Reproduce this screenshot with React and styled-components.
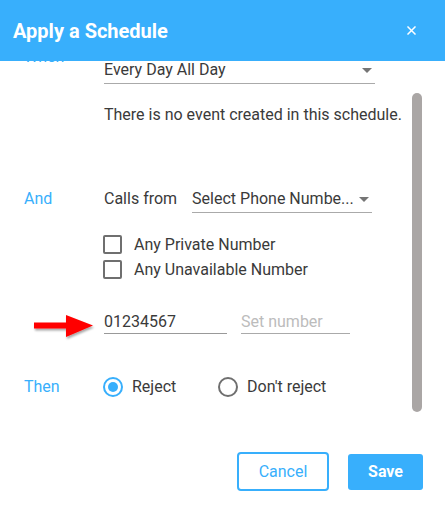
import React from "react";
import styled, { createGlobalStyle } from "styled-components";

const GlobalStyle = createGlobalStyle`
  html, body {
    margin: 0;
    padding: 0;
    background: #ffffff;
  }
  body {
    font-family: Roboto, "Liberation Sans", sans-serif;
    color: #3a3a3a;
  }
`;

const BLUE = "#38affc";

const App = () => {
  return (
    <>
      <GlobalStyle />
      <Dialog>
        <Header>
          <Title>Apply a Schedule</Title>
          <CloseButton aria-label="close">
            <svg width="9" height="9" viewBox="0 0 9 9">
              <path
                d="M1 1 L8 8 M8 1 L1 8"
                stroke="#fff"
                strokeWidth="1.5"
                strokeLinecap="square"
              />
            </svg>
          </CloseButton>
        </Header>

        <Body>
          <Content>
            <Row>
              <Label>When</Label>
              <Select $width={271} $top={15}>
                <span>Every Day All Day</span>
                <Caret />
              </Select>
            </Row>

            <Note>There is no event created in this schedule.</Note>

            <Row $mt={60} $align="flex-end">
              <Label $lh={20} $pb={4}>And</Label>
              <Inline>
                <PlainText>Calls from</PlainText>
                <Select $width={180} $top={4}>
                  <Ellipsis>Select Phone Numbe...</Ellipsis>
                  <Caret $gap={4} />
                </Select>
              </Inline>
            </Row>

            <Checks>
              <Check>
                <Box />
                Any Private Number
              </Check>
              <Check>
                <Box />
                Any Unavailable Number
              </Check>
            </Checks>

            <Row $mt={27} $align="center">
              <ArrowCell>
                <svg width="66" height="40" viewBox="0 0 66 40">
                  <defs>
                    <filter id="sh" x="-20%" y="-40%" width="140%" height="180%">
                      <feDropShadow dx="1" dy="2" stdDeviation="1.2" floodColor="#000" floodOpacity="0.35" />
                    </filter>
                  </defs>
                  <path
                    d="M3 20.5 L35 20.5 L35 13 L62 23.5 L35 35 L35 26.5 L3 26.5 Z"
                    fill="#ff0000"
                    filter="url(#sh)"
                  />
                </svg>
              </ArrowCell>
              <Inline $gap={14}>
                <TextField $width={123}>01234567</TextField>
                <TextField $width={109} $placeholder>Set number</TextField>
              </Inline>
            </Row>

            <Row $mt={41} $align="center">
              <Label $lh={24}>Then</Label>
              <Inline $gap={0}>
                <Radio>
                  <Circle $checked />
                  Reject
                </Radio>
                <Radio>
                  <Circle />
                  Don't reject
                </Radio>
              </Inline>
            </Row>
          </Content>
          <Thumb />
        </Body>

        <Footer>
          <OutlineButton>Cancel</OutlineButton>
          <SolidButton>Save</SolidButton>
        </Footer>
      </Dialog>
    </>
  );
};

export default App;

const Dialog = styled.div`
  width: 445px;
  height: 509px;
  background: #fff;
  display: flex;
  flex-direction: column;
  overflow: hidden;
`;

const Header = styled.div`
  height: 61px;
  flex-shrink: 0;
  background: ${BLUE};
  display: flex;
  align-items: center;
  justify-content: space-between;
  padding: 0 29px 0 13px;
  position: relative;
  z-index: 2;
`;

const Title = styled.h1`
  margin: 0;
  color: #fff;
  font-size: 20px;
  font-weight: 700;
`;

const CloseButton = styled.button`
  border: none;
  background: none;
  padding: 0;
  display: flex;
  cursor: pointer;
`;

const Body = styled.div`
  height: 369px;
  flex-shrink: 0;
  position: relative;
  overflow: hidden;
`;

const Content = styled.div`
  margin-top: -16px;
  padding-left: 24px;
  display: flex;
  flex-direction: column;
  font-size: 16px;
`;

const Row = styled.div`
  display: flex;
  align-items: ${(p) => p.$align || "flex-start"};
  margin-top: ${(p) => p.$mt || 0}px;
`;

const Label = styled.div`
  width: 80px;
  flex-shrink: 0;
  color: ${BLUE};
  font-size: 16px;
  line-height: ${(p) => p.$lh || 24}px;
  padding-bottom: ${(p) => p.$pb || 0}px;
`;

const ArrowCell = styled.div`
  width: 80px;
  height: 25px;
  flex-shrink: 0;
  display: flex;
  align-items: center;
  padding-left: 7px;
  box-sizing: border-box;
`;

const Inline = styled.div`
  display: flex;
  align-items: flex-end;
  gap: ${(p) => (p.$gap !== undefined ? p.$gap : 15)}px;
`;

const PlainText = styled.span`
  line-height: 20px;
  padding-bottom: 4px;
  white-space: nowrap;
`;

const Select = styled.div`
  width: ${(p) => p.$width}px;
  box-sizing: border-box;
  padding: ${(p) => p.$top}px 0 3px 0;
  border-bottom: 1px solid #aaa;
  line-height: 20px;
  display: flex;
  align-items: center;
  justify-content: space-between;
  white-space: nowrap;
`;

const Ellipsis = styled.span`
  overflow: hidden;
  white-space: nowrap;
`;

const Caret = styled.span`
  flex-shrink: 0;
  width: 0;
  height: 0;
  border-left: 5px solid transparent;
  border-right: 5px solid transparent;
  border-top: 5px solid #757575;
  margin-left: ${(p) => p.$gap || 0}px;
  margin-right: 3px;
`;

const Note = styled.p`
  margin: 21px 0 0 80px;
  line-height: 20px;
`;

const Checks = styled.div`
  margin: 19px 0 0 79px;
  display: flex;
  flex-direction: column;
`;

const Check = styled.label`
  height: 25px;
  display: flex;
  align-items: center;
  gap: 12px;
`;

const Box = styled.span`
  width: 19px;
  height: 19px;
  box-sizing: border-box;
  border: 2px solid #6f6f6f;
  border-radius: 2px;
`;

const TextField = styled.div`
  width: ${(p) => p.$width}px;
  box-sizing: border-box;
  padding: 3px 0 1px;
  line-height: 20px;
  border-bottom: 1px solid ${(p) => (p.$placeholder ? "#aaa" : "#999")};
  color: ${(p) => (p.$placeholder ? "#bcbcbc" : "#3a3a3a")};
`;

const Radio = styled.label`
  display: flex;
  align-items: center;
  gap: 9px;
  width: 116px;
  line-height: 24px;
  margin-left: -1px;
  white-space: nowrap;
`;

const Circle = styled.span`
  width: 20px;
  height: 20px;
  flex-shrink: 0;
  box-sizing: border-box;
  border-radius: 50%;
  border: 2px solid ${(p) => (p.$checked ? BLUE : "#6f6f6f")};
  display: flex;
  align-items: center;
  justify-content: center;

  &::after {
    content: "";
    display: ${(p) => (p.$checked ? "block" : "none")};
    width: 10px;
    height: 10px;
    border-radius: 50%;
    background: ${BLUE};
  }
`;

const Thumb = styled.div`
  position: absolute;
  top: 32px;
  left: 412px;
  width: 10px;
  height: 319px;
  border-radius: 5px;
  background: #aaa6a5;
`;

const Footer = styled.div`
  display: flex;
  justify-content: flex-end;
  align-items: center;
  gap: 19px;
  padding: 22px 22px 0 0;
`;

const OutlineButton = styled.button`
  width: 92px;
  height: 39px;
  border: 2px solid ${BLUE};
  border-radius: 4px;
  background: #fff;
  color: ${BLUE};
  font-family: Roboto, "Liberation Sans", sans-serif;
  font-size: 16px;
  cursor: pointer;
`;

const SolidButton = styled.button`
  width: 75px;
  height: 36px;
  border: none;
  border-radius: 3px;
  background: ${BLUE};
  color: #fff;
  font-family: Roboto, "Liberation Sans", sans-serif;
  font-size: 16px;
  font-weight: 700;
  cursor: pointer;
`;
